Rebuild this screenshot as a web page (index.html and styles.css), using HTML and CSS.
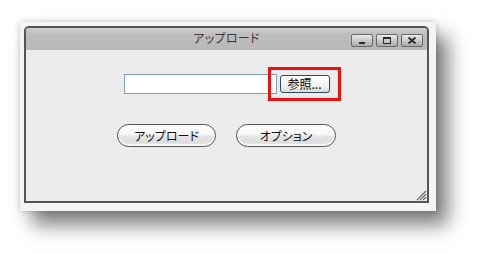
FILE: index.html
```html
<!DOCTYPE html>
<html lang="ja">
<head>
<meta charset="utf-8">
<title>アップロード</title>
<link rel="stylesheet" href="styles.css">
</head>
<body>
<div class="frame">
  <div class="window">
    <div class="titlebar">
      <span></span>
      <span class="title">アップロード</span>
      <div class="controls">
        <span class="ctl"><svg width="22" height="13" viewBox="0 0 22 13"><rect x="8" y="8" width="6" height="2" fill="#2a2a2a"/></svg></span>
        <span class="ctl"><svg width="22" height="13" viewBox="0 0 22 13"><rect x="7.5" y="3.5" width="7" height="6" fill="none" stroke="#2a2a2a" stroke-width="1"/><rect x="7.5" y="3.5" width="7" height="1.5" fill="#2a2a2a"/></svg></span>
        <span class="ctl"><svg width="22" height="13" viewBox="0 0 22 13"><path d="M7.5 3.5 L14.5 9.5 M14.5 3.5 L7.5 9.5" stroke="#2a2a2a" stroke-width="1.8" fill="none"/></svg></span>
      </div>
    </div>
    <div class="content">
      <div class="file-row">
        <div class="file-input"></div>
        <div class="browse-wrap">
          <button class="browse">参照...</button>
          <span class="highlight"></span>
        </div>
      </div>
      <div class="action-row">
        <button class="pill pill-upload">アップロード</button>
        <button class="pill pill-options">オプション</button>
      </div>
      <svg class="grip" width="12" height="12" viewBox="0 0 12 12">
        <path d="M11 2 L2 11 M11 5 L5 11 M11 8 L8 11" stroke="#666" stroke-width="1.2" fill="none"/>
        <path d="M11 3.5 L3.5 11 M11 6.5 L6.5 11" stroke="#ddd" stroke-width="0.8" fill="none"/>
      </svg>
    </div>
  </div>
</div>
</body>
</html>
```

FILE: styles.css
```css
html, body {
  margin: 0;
  background: #ffffff;
}
html {
  height: 253px;
}
body {
  box-sizing: border-box;
  min-height: 253px;
  padding: 22px 0 0 20px;
  font-family: "Noto Sans CJK JP", "DejaVu Sans", sans-serif;
  font-feature-settings: "palt";
}
.frame {
  width: 405px;
  padding: 4px 7px 8px 4px;
  background: #f4f4f4;
  box-shadow: 0 0 6px rgba(0,0,0,0.22), 12px 14px 18px rgba(0,0,0,0.5);
}
.window {
  width: 401px;
  height: 173px;
  border: 2px solid #555555;
  border-radius: 5px 5px 0 0;
  background: #ececec;
  display: flex;
  flex-direction: column;
  overflow: hidden;
}
.titlebar {
  height: 22px;
  flex: none;
  background: linear-gradient(#cfcfcf, #bdbdbd 30%, #b9b9b9);
  display: grid;
  grid-template-columns: 1fr auto 1fr;
  align-items: center;
}
.title {
  font-size: 12px;
  line-height: 14px;
  color: #3a3a3a;
  letter-spacing: 0.3px;
  margin-top: -2px;
}
.controls {
  justify-self: end;
  display: flex;
  gap: 3px;
  padding-right: 4px;
  margin-top: 3px;
}
.ctl {
  width: 20px;
  height: 11px;
  border: 1px solid #666;
  border-radius: 2px;
  background: linear-gradient(#ececec, #c4c4c4 60%, #a9a9a9);
  display: flex;
  align-items: center;
  justify-content: center;
  overflow: hidden;
}
.ctl svg {
  flex: none;
}
.content {
  flex: 1;
  position: relative;
  padding-top: 24px;
  display: flex;
  flex-direction: column;
  align-items: center;
}
.file-row {
  display: flex;
  align-items: center;
  gap: 3px;
}
.file-input {
  width: 151px;
  height: 18px;
  border: 1px solid #7f9db9;
  background: #ffffff;
}
.browse-wrap {
  position: relative;
}
.browse {
  display: block;
  width: 50px;
  height: 18px;
  padding: 0;
  border: 1px solid #2c4a6a;
  border-radius: 3px;
  background: linear-gradient(#ffffff, #f2f2ee 60%, #dcdcd6);
  font-family: "Noto Sans CJK JP", sans-serif;
  font-feature-settings: "palt";
  font-size: 12px;
  line-height: 14px;
  color: #000;
}
.highlight {
  position: absolute;
  left: -12px;
  top: -8px;
  right: -11px;
  bottom: -8px;
  border: 3px solid #ee1111;
}
.action-row {
  margin-top: 30px;
  display: flex;
  gap: 20px;
}
.pill {
  height: 23px;
  padding: 0;
  border: 1px solid #555;
  border-radius: 12px;
  background: linear-gradient(#ffffff, #f6f6f6 45%, #e4e4e4 55%, #d8d8d8);
  box-shadow: inset 0 -2px 2px rgba(255,255,255,0.9);
  font-family: "Noto Sans CJK JP", sans-serif;
  font-feature-settings: "palt";
  font-size: 12px;
  line-height: 14px;
  color: #111;
}
.pill-upload {
  width: 99px;
}
.pill-options {
  width: 100px;
}
.grip {
  position: absolute;
  right: 0;
  bottom: 0;
}
```
